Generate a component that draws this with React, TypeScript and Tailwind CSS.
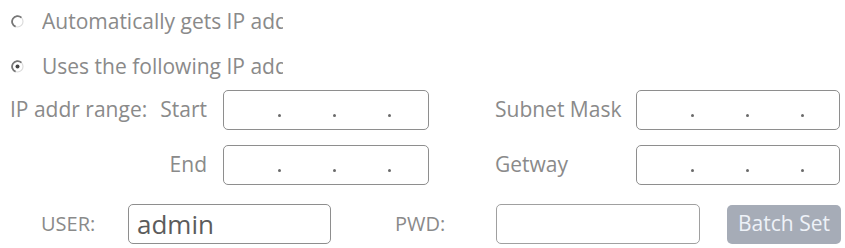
import React from 'react';

const Radio = ({ checked }: { checked?: boolean }) => (
  <svg width="13" height="13" viewBox="0 0 13 13" className="shrink-0">
    <circle cx="6.5" cy="6.5" r="5.5" fill="#fff" stroke="#dcdcdc" strokeWidth="1.2" />
    <path d="M10.4 2.6 A5.5 5.5 0 1 0 4.6 11.7" fill="none" stroke="#777" strokeWidth="1.8" />
    {checked && <circle cx="6.5" cy="6.5" r="2" fill="#444" />}
  </svg>
);

const IpBox = ({ width }: { width: string }) => (
  <div className={`flex h-[40px] items-center rounded-[5px] border-[1.5px] border-[#8e8e8e] bg-white px-[2px] ${width}`}>
    <div className="w-[52px]" />
    <span className="h-[3px] w-[3px] shrink-0 translate-y-[5px] rounded-full bg-[#6a6a6a]" />
    <div className="w-[52px]" />
    <span className="h-[3px] w-[3px] shrink-0 translate-y-[5px] rounded-full bg-[#6a6a6a]" />
    <div className="w-[52px]" />
    <span className="h-[3px] w-[3px] shrink-0 translate-y-[5px] rounded-full bg-[#6a6a6a]" />
    <div className="flex-1" />
  </div>
);

export default function App() {
  return (
    <div
      className="h-[248px] w-[845px] overflow-hidden bg-white text-[#8a8a8a]"
      style={{ fontFamily: '"Open Sans", "Noto Sans", sans-serif' }}
    >
      <div className="flex flex-col pt-[7px]">
        {/* Mode radios */}
        <label className="flex h-[28px] items-center pl-[11px]">
          <Radio />
          <span className="ml-[18px] h-[28px] w-[241px] overflow-hidden whitespace-nowrap text-[21px] leading-[28px]">
            Automatically gets IP address
          </span>
        </label>
        <label className="mt-[17px] flex h-[28px] items-center pl-[11px]">
          <Radio checked />
          <span className="ml-[18px] h-[28px] w-[241px] overflow-hidden whitespace-nowrap text-[21px] leading-[28px]">
            Uses the following IP address
          </span>
        </label>

        {/* Range start / mask */}
        <div className="mt-[10px] flex items-center text-[21px]">
          <div className="flex w-[207px] justify-between pl-[10px]">
            <span>IP addr range:</span>
            <span>Start</span>
          </div>
          <div className="ml-[16px]">
            <IpBox width="w-[206px]" />
          </div>
          <span className="ml-[66px] w-[141px]">Subnet Mask</span>
          <IpBox width="w-[204px]" />
        </div>

        {/* Range end / gateway */}
        <div className="mt-[15px] flex items-center text-[21px]">
          <div className="w-[207px] text-right">End</div>
          <div className="ml-[16px]">
            <IpBox width="w-[206px]" />
          </div>
          <span className="ml-[66px] w-[141px]">Getway</span>
          <IpBox width="w-[204px]" />
        </div>

        {/* Credentials */}
        <div className="mt-[19px] flex items-center pl-[41px] text-[20px]">
          <span className="w-[87px]">USER:</span>
          <div className="flex h-[40px] w-[203px] items-center rounded-[5px] border-[1.5px] border-[#8e8e8e] pl-[8px] text-[26px] text-[#5c5c5c]">
            admin
          </div>
          <span className="ml-[64px] w-[101px]">PWD:</span>
          <div className="h-[40px] w-[204px] rounded-[5px] border-[1.5px] border-[#a0a0a0]" />
          <button className="ml-[27px] flex h-[39px] w-[114px] items-center justify-center rounded-[5px] bg-[#a6acb7] text-[21px] text-[#eef2f8]">
            Batch Set
          </button>
        </div>
      </div>
    </div>
  );
}
